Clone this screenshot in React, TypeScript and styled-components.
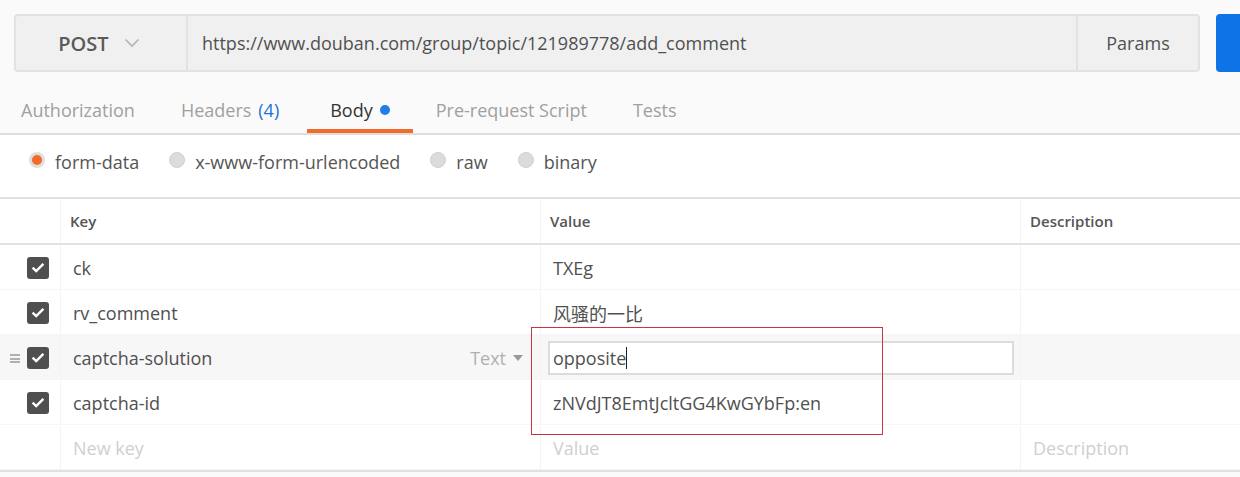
import styled, { createGlobalStyle } from "styled-components";

const GlobalStyle = createGlobalStyle`
  html, body {
    margin: 0;
    padding: 0;
    background: #fafafa;
    overflow: hidden;
  }
  body {
    font-family: "Open Sans", "Noto Sans CJK SC", sans-serif;
    color: #505050;
  }
`;

interface Param {
  key: string;
  value: string;
  active?: boolean;
}

const params: Param[] = [
  { key: "ck", value: "TXEg" },
  { key: "rv_comment", value: "风骚的一比" },
  { key: "captcha-solution", value: "opposite", active: true },
  { key: "captcha-id", value: "zNVdJT8EmtJcltGG4KwGYbFp:en" },
];

const tabs = [
  { label: "Authorization" },
  { label: "Headers", count: "(4)" },
  { label: "Body", active: true },
  { label: "Pre-request Script" },
  { label: "Tests" },
];

const modes = ["form-data", "x-www-form-urlencoded", "raw", "binary"];

const App = () => {
  return (
    <Page>
      <GlobalStyle />
      <TopBar>
        <RequestBox>
          <Method>
            POST
            <svg width="16" height="10" viewBox="0 0 16 10">
              <path d="M1.5 1.5 L8 8 L14.5 1.5" fill="none" stroke="#b5b5b5" strokeWidth="1.6" />
            </svg>
          </Method>
          <Url>https://www.douban.com/group/topic/121989778/add_comment</Url>
          <ParamsButton>Params</ParamsButton>
        </RequestBox>
        <SendButton />
      </TopBar>

      <Tabs>
        {tabs.map((t) => (
          <Tab key={t.label} $active={!!t.active}>
            {t.label}
            {t.count && <Count>{t.count}</Count>}
            {t.active && <Dot />}
          </Tab>
        ))}
      </Tabs>

      <BodyPanel>
        <Modes>
          {modes.map((m, i) => (
            <Mode key={m}>
              <Radio $checked={i === 0} />
              {m}
            </Mode>
          ))}
        </Modes>

        <Table>
          <HeaderRow>
            <Cell />
            <HeadCell>Key</HeadCell>
            <HeadCell>Value</HeadCell>
            <HeadCell>Description</HeadCell>
          </HeaderRow>
          {params.map((p) => (
            <Row key={p.key} $active={!!p.active}>
              <CheckCell>
                {p.active && <Handle />}
                <Check>
                  <svg width="14" height="11" viewBox="0 0 14 11">
                    <path d="M1.6 5.6 L5.2 9 L12.4 1.8" fill="none" stroke="#fff" strokeWidth="2.4" />
                  </svg>
                </Check>
              </CheckCell>
              <KeyCell>
                {p.key}
                {p.active && (
                  <TypeSelect>
                    Text
                    <svg width="10" height="7" viewBox="0 0 10 7">
                      <path d="M0 0 H10 L5 6 Z" fill="#999" />
                    </svg>
                  </TypeSelect>
                )}
              </KeyCell>
              <ValueCell>
                {p.active ? (
                  <ValueInput>
                    {p.value}
                    <Caret />
                  </ValueInput>
                ) : (
                  p.value
                )}
              </ValueCell>
              <Cell />
            </Row>
          ))}
          <Row $active={false}>
            <CheckCell />
            <KeyCell $placeholder>New key</KeyCell>
            <ValueCell $placeholder>Value</ValueCell>
            <KeyCell $placeholder>Description</KeyCell>
          </Row>
          <Annotation />
        </Table>
      </BodyPanel>
    </Page>
  );
};

const Page = styled.div`
  width: 1240px;
  height: 477px;
  overflow: hidden;
  background: #fafafa;
`;

const TopBar = styled.div`
  display: flex;
  align-items: stretch;
  gap: 16px;
  padding: 14px 0 0 14px;
  height: 58px;
`;

const RequestBox = styled.div`
  display: flex;
  width: 1186px;
  flex-shrink: 0;
  border: 2px solid #e2e2e2;
  border-radius: 4px;
  background: #f0f0f0;
  box-sizing: border-box;
`;

const Method = styled.div`
  width: 172px;
  flex-shrink: 0;
  display: flex;
  align-items: center;
  justify-content: center;
  gap: 15px;
  font-size: 20px;
  font-weight: 600;
  color: #5a5a5a;
  border-right: 2px solid #e2e2e2;
  padding-right: 4px;
  box-sizing: border-box;
`;

const Url = styled.div`
  flex: 1;
  display: flex;
  align-items: center;
  padding-left: 14px;
  font-size: 18px;
  color: #505050;
`;

const ParamsButton = styled.div`
  width: 120px;
  display: flex;
  align-items: center;
  justify-content: center;
  border-left: 2px solid #e2e2e2;
  font-size: 18px;
  color: #505050;
`;

const SendButton = styled.div`
  width: 120px;
  flex-shrink: 0;
  background: #0e73e6;
  border-radius: 4px;
`;

const Tabs = styled.div`
  display: flex;
  height: 61px;
  padding-left: 21px;
  gap: 46px;
  border-bottom: 2px solid #dedede;
`;

const Tab = styled.div<{ $active: boolean }>`
  display: flex;
  align-items: center;
  padding-top: 14px;
  font-size: 18px;
  color: ${({ $active }) => ($active ? "#333" : "#a0a0a0")};
  position: relative;
  margin-left: ${({ $active }) => ($active ? "5px" : "0")};
  &::after {
    content: "";
    display: ${({ $active }) => ($active ? "block" : "none")};
    position: absolute;
    left: -23px;
    right: -23px;
    bottom: 0;
    height: 4px;
    background: #f26b2a;
  }
`;

const Count = styled.span`
  color: #1a73d9;
  margin-left: 7px;
`;

const Dot = styled.span`
  width: 10px;
  height: 10px;
  border-radius: 50%;
  background: #1f7ee8;
  margin-left: 7px;
  margin-top: 1px;
`;

const BodyPanel = styled.div`
  background: #fff;
`;

const Modes = styled.div`
  display: flex;
  align-items: center;
  height: 54px;
  padding: 0 0 8px 29px;
  gap: 30px;
`;

const Mode = styled.div`
  display: flex;
  align-items: center;
  gap: 10px;
  font-size: 18px;
  color: #555;
`;

const Radio = styled.span<{ $checked: boolean }>`
  width: 16px;
  height: 16px;
  border-radius: 50%;
  box-sizing: border-box;
  margin-top: -4px;
  background: ${({ $checked }) => ($checked ? "#f26b2a" : "#dcdcdc")};
  border: ${({ $checked }) => ($checked ? "3px solid #dedede" : "1px solid #cfcfcf")};
`;

const Table = styled.div`
  position: relative;
  border-top: 2px solid #e0e0e0;
  border-bottom: 2px solid #e0e0e0;
`;

const Grid = styled.div`
  display: grid;
  grid-template-columns: 60px 480px 480px 1fr;
  box-sizing: border-box;
`;

const HeaderRow = styled(Grid)`
  height: 46px;
  border-bottom: 2px solid #e2e2e2;
`;

const Row = styled(Grid)<{ $active: boolean }>`
  height: 45px;
  padding-top: 1px;
  background: ${({ $active }) => ($active ? "#f7f7f7" : "#fff")};
  border-bottom: 1px solid #f6f6f6;
  &:last-of-type {
    border-bottom: none;
  }
`;

const Cell = styled.div`
  border-left: 1px solid #f3f3f3;
  &:first-child {
    border-left: none;
  }
`;

const HeadCell = styled(Cell)`
  display: flex;
  align-items: center;
  padding-left: 9px;
  font-size: 15px;
  font-weight: 600;
  color: #555;
`;

const CheckCell = styled.div`
  position: relative;
  display: flex;
  align-items: center;
  padding-left: 27px;
`;

const Handle = styled.span`
  position: absolute;
  left: 10px;
  top: 18px;
  width: 10px;
  height: 9px;
  background: repeating-linear-gradient(#b0b0b0 0 2px, transparent 2px 3.5px);
`;

const Check = styled.span`
  width: 22px;
  height: 22px;
  border-radius: 3px;
  background: #4f4f4f;
  display: flex;
  align-items: center;
  justify-content: center;
`;

const KeyCell = styled(Cell)<{ $placeholder?: boolean }>`
  display: flex;
  align-items: center;
  padding-left: 12px;
  padding-right: 17px;
  font-size: 18px;
  color: ${({ $placeholder }) => ($placeholder ? "#cfcfcf" : "#505050")};
`;

const ValueCell = styled(KeyCell)`
  padding-left: 12px;
  padding-right: 6px;
`;

const TypeSelect = styled.span`
  margin-left: auto;
  display: flex;
  align-items: center;
  gap: 7px;
  color: #b0b0b0;
  svg {
    margin-top: 2px;
  }
`;

const ValueInput = styled.div`
  flex: 1;
  margin-left: -5px;
  height: 34px;
  box-sizing: border-box;
  border: 2px solid #dcdcdc;
  background: #fff;
  display: flex;
  align-items: center;
  padding-left: 3px;
  color: #505050;
`;

const Caret = styled.span`
  width: 1px;
  height: 22px;
  background: #222;
`;

const Annotation = styled.div`
  position: absolute;
  left: 531px;
  top: 128px;
  width: 350px;
  height: 106px;
  border: 1px solid #c9343f;
  pointer-events: none;
`;

export default App;
